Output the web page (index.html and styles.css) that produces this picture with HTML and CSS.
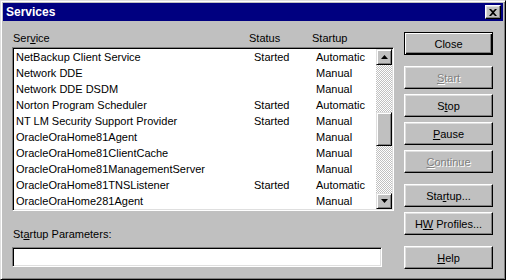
FILE: index.html
```html
<!DOCTYPE html>
<html lang="en">
<head>
    <meta charset="UTF-8">
    <title>Services</title>
    <link rel="stylesheet" href="styles.css">
</head>
<body>
    <div class="window">
        <div class="titlebar">
            <span class="title">Services</span>
            <button class="title-close" aria-label="Close">
                <svg width="8" height="7" viewBox="0 0 8 7"><path d="M0 0h2l2 2 2-2h2L5 3.5 8 7H6L4 5 2 7H0l3-3.5z" fill="#000"/></svg>
            </button>
        </div>

        <div class="dialog">
            <div class="left">
                <div class="headers">
                    <span class="col-service">Ser<u>v</u>ice</span>
                    <span class="col-status">Status</span>
                    <span class="col-startup">Startup</span>
                </div>

                <div class="listbox">
                    <div class="rows">
                        <div class="row"><span class="c1">NetBackup Client Service</span><span class="c2">Started</span><span class="c3">Automatic</span></div>
                        <div class="row"><span class="c1">Network DDE</span><span class="c2"></span><span class="c3">Manual</span></div>
                        <div class="row"><span class="c1">Network DDE DSDM</span><span class="c2"></span><span class="c3">Manual</span></div>
                        <div class="row"><span class="c1">Norton Program Scheduler</span><span class="c2">Started</span><span class="c3">Automatic</span></div>
                        <div class="row"><span class="c1">NT LM Security Support Provider</span><span class="c2">Started</span><span class="c3">Manual</span></div>
                        <div class="row"><span class="c1">OracleOraHome81Agent</span><span class="c2"></span><span class="c3">Manual</span></div>
                        <div class="row"><span class="c1">OracleOraHome81ClientCache</span><span class="c2"></span><span class="c3">Manual</span></div>
                        <div class="row"><span class="c1">OracleOraHome81ManagementServer</span><span class="c2"></span><span class="c3">Manual</span></div>
                        <div class="row"><span class="c1">OracleOraHome81TNSListener</span><span class="c2">Started</span><span class="c3">Automatic</span></div>
                        <div class="row"><span class="c1">OracleOraHome281Agent</span><span class="c2"></span><span class="c3">Manual</span></div>
                    </div>
                    <div class="scrollbar">
                        <div class="sb-btn">
                            <svg width="7" height="4" viewBox="0 0 7 4"><path d="M3.5 0L7 4H0z" fill="#000"/></svg>
                        </div>
                        <div class="track track-top"></div>
                        <div class="thumb"></div>
                        <div class="track track-bottom"></div>
                        <div class="sb-btn">
                            <svg width="7" height="4" viewBox="0 0 7 4"><path d="M0 0h7L3.5 4z" fill="#000"/></svg>
                        </div>
                    </div>
                </div>

                <label class="param-label">St<u>a</u>rtup Parameters:</label>
                <div class="param-input"></div>
            </div>

            <div class="buttons">
                <div class="btn default"><span>Close</span></div>
                <div class="btn disabled sep"><span><u>S</u>tart</span></div>
                <div class="btn"><span>S<u>t</u>op</span></div>
                <div class="btn"><span><u>P</u>ause</span></div>
                <div class="btn disabled"><span><u>C</u>ontinue</span></div>
                <div class="btn sep"><span>Sta<u>r</u>tup...</span></div>
                <div class="btn"><span>H<u>W</u> Profiles...</span></div>
                <div class="btn sep"><span><u>H</u>elp</span></div>
            </div>
        </div>
    </div>
</body>
</html>
```

FILE: styles.css
```css
body, html {
    margin: 0;
    padding: 0;
    background: #c0c0c0;
    font-family: 'Liberation Sans', Arial, sans-serif;
    font-size: 11px;
    color: #000;
}
.window {
    width: 506px;
    height: 280px;
    box-sizing: border-box;
    border: 1px solid;
    border-color: #dfdfdf #000 #000 #dfdfdf;
    box-shadow: inset 1px 1px #fff, inset -1px -1px #808080;
    padding: 2px;
    background: #c0c0c0;
}
.titlebar {
    height: 18px;
    background: #000080;
    color: #fff;
    display: flex;
    align-items: center;
    justify-content: space-between;
    padding: 0 2px 0 3px;
}
.title {
    font-weight: bold;
    font-size: 12px;
}
.title-close {
    width: 16px;
    height: 14px;
    box-sizing: border-box;
    padding: 0;
    margin: 0;
    background: #c0c0c0;
    border: 1px solid;
    border-color: #fff #000 #000 #fff;
    box-shadow: inset -1px -1px #808080, inset 1px 1px #dfdfdf;
    display: flex;
    align-items: center;
    justify-content: center;
}
.dialog {
    display: flex;
    gap: 10px;
    padding: 11px 10px 0 9px;
}
.left {
    width: 382px;
    display: flex;
    flex-direction: column;
}
.headers {
    height: 15px;
    display: flex;
    align-items: flex-start;
    padding-left: 1px;
    line-height: 13px;
}
.col-service { width: 236px; }
.col-status { width: 63px; }
.listbox {
    height: 164px;
    box-sizing: border-box;
    border: 1px solid;
    border-color: #808080 #fff #fff #808080;
    box-shadow: inset 1px 1px #000, inset -1px -1px #dfdfdf;
    padding: 1px;
    display: flex;
}
.rows {
    flex: 1;
    background: #fff;
    padding-left: 2px;
}
.row {
    height: 16px;
    line-height: 16px;
    display: flex;
    white-space: nowrap;
}
.c1 { width: 238px; }
.c2 { width: 62px; }
.scrollbar {
    width: 16px;
    display: flex;
    flex-direction: column;
}
.sb-btn, .thumb {
    box-sizing: border-box;
    border: 1px solid;
    border-color: #dfdfdf #000 #000 #dfdfdf;
    box-shadow: inset 1px 1px #fff, inset -1px -1px #808080;
    background: #c0c0c0;
}
.sb-btn {
    height: 16px;
    display: flex;
    align-items: center;
    justify-content: center;
}
.track {
    background: repeating-conic-gradient(#fff 0 25%, #c0c0c0 0 50%) 0 0 / 2px 2px;
}
.track-top { height: 47px; }
.thumb { height: 34px; }
.track-bottom { flex: 1; }
.param-label {
    margin-top: 17px;
    height: 19px;
    line-height: 13px;
    padding-left: 1px;
}
.param-input {
    width: 370px;
    height: 20px;
    box-sizing: border-box;
    border: 1px solid;
    border-color: #808080 #fff #fff #808080;
    box-shadow: inset 1px 1px #000, inset -1px -1px #dfdfdf;
    background: #fff;
}
.buttons {
    width: 89px;
    display: flex;
    flex-direction: column;
    gap: 5px;
}
.btn {
    height: 23px;
    box-sizing: border-box;
    border: 1px solid;
    border-color: #fff #000 #000 #fff;
    box-shadow: inset -1px -1px #808080, inset 1px 1px #dfdfdf;
    display: flex;
    align-items: center;
    justify-content: center;
    white-space: nowrap;
}
.btn.default {
    border-color: #000;
    box-shadow: inset 1px 1px #fff, inset -1px -1px #000, inset -2px -2px #808080;
}
.btn.sep {
    margin-top: 6px;
}
.btn.disabled {
    color: #808080;
    text-shadow: 1px 1px #fff;
}
```
